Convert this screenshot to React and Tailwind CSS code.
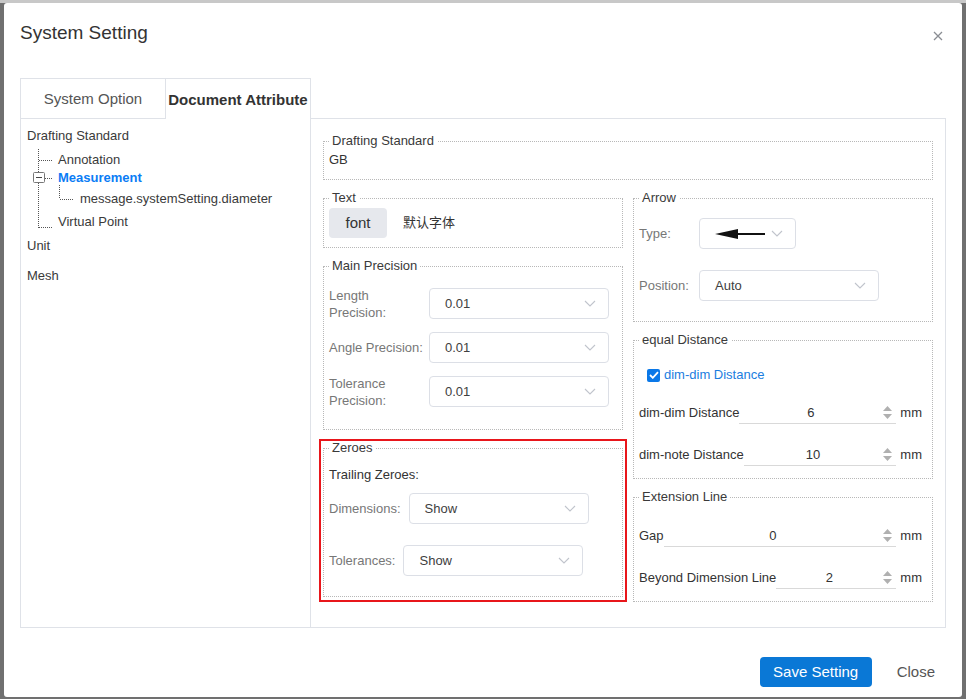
import React from "react";

const FONT = { fontFamily: '"Liberation Sans", "Noto Sans CJK SC", sans-serif' };

function Chevron() {
  return (
    <svg width="12" height="7" viewBox="0 0 12 7" fill="none">
      <path d="M1 1l5 5 5-5" stroke="#c0c4cc" strokeWidth="1.1" />
    </svg>
  );
}

function Select({ value, width, children }) {
  return (
    <div
      className={`h-[31px] ${width} shrink-0 border border-[#dcdfe6] rounded-[4px] flex items-center justify-between pl-[15px] pr-[12px] text-[13px] text-[#404040]`}
    >
      {children || <span>{value}</span>}
      <Chevron />
    </div>
  );
}

function Box({ title, className = "", children }) {
  return (
    <fieldset className={`border border-dotted border-[#b8b8b8] px-[5px] ${className}`}>
      <legend className="px-[3px] text-[13px] leading-[14px] text-[#3a3a3a]">{title}</legend>
      {children}
    </fieldset>
  );
}

function Spin({ label, value, className = "" }) {
  return (
    <div className={`flex items-center h-[22px] text-[13px] text-[#333] ${className}`}>
      <span className="whitespace-nowrap">{label}</span>
      <div className="flex-1 h-[22px] flex items-center border-b border-[#d9d9d9]">
        <span className="flex-1 text-center">{value}</span>
        <div className="w-[10px] mr-[4px] flex flex-col items-center gap-[3px]">
          <svg width="9" height="5" viewBox="0 0 9 5">
            <path d="M0 5L4.5 0 9 5z" fill="#b0b0b0" />
          </svg>
          <svg width="9" height="5" viewBox="0 0 9 5">
            <path d="M0 0L4.5 5 9 0z" fill="#b0b0b0" />
          </svg>
        </div>
      </div>
      <span className="ml-[4px]">mm</span>
    </div>
  );
}

// dotted connectors of the tree, coords relative to the tree block (x 21, y 119)
function TreeLines() {
  return (
    <svg className="absolute left-0 top-0 pointer-events-none" width="80" height="120" fill="none">
      <g stroke="#555" strokeWidth="1" strokeDasharray="1 1">
        <path d="M17.5 30v24M17.5 64v45" />
        <path d="M18 41.5h13M24 59.5h7M18 108.5h13" />
        <path d="M38.5 66v14M39 80.5h13" />
      </g>
      <rect x="12.5" y="53.5" width="11" height="10" rx="1" stroke="#777" fill="#fff" />
      <path d="M15 58.5h6" stroke="#444" strokeWidth="1" />
    </svg>
  );
}

export default function App() {
  return (
    <div className="w-full h-[699px] bg-[#707070] overflow-hidden" style={FONT}>
      <div className="h-[3px] bg-[#c8c8c8]" />
      <div className="relative ml-[4px] w-[958px] h-[694px] bg-white rounded-[3px]">
        <div className="absolute right-[19px] top-[28px]">
          <svg width="10" height="10" viewBox="0 0 10 10">
            <path d="M1 1l8 8M9 1L1 9" stroke="#8a8d93" strokeWidth="1.3" />
          </svg>
        </div>

        <div className="pl-4 pt-4 h-[44px] text-[19px] leading-[28px] text-[#333]">System Setting</div>

        <div className="flex ml-4 mt-[31px] h-[550px]">
          <div className="relative w-[291px] border border-[#dfe2e8] flex flex-col">
            <div className="flex h-[40px] shrink-0">
              <div className="w-[145px] pt-[2px] border-r border-b border-[#dfe2e8] flex items-center justify-center text-[15px] text-[#555]">
                System Option
              </div>
              <div className="flex-1 pt-[2px] flex items-center justify-center whitespace-nowrap text-[15px] font-bold text-[#333]">
                Document Attribute
              </div>
            </div>
            <div className="relative text-[13px] leading-[16px] text-[#3a3a3a]">
              <TreeLines />
              <div className="pl-[6px] pt-[9px]">Drafting Standard</div>
              <div className="pl-[37px] mt-[8px]">Annotation</div>
              <div className="pl-[37px] mt-[2px] font-bold text-[#0a7cf5]">Measurement</div>
              <div className="pl-[59px] mt-[5px]">message.systemSetting.diameter</div>
              <div className="pl-[37px] mt-[7px]">Virtual Point</div>
              <div className="pl-[6px] mt-[8px]">Unit</div>
              <div className="pl-[6px] mt-[14px]">Mesh</div>
            </div>
          </div>

          <div className="w-[635px] mt-[40px] border-t border-r border-b border-[#dfe2e8] pl-[12px] pr-[12px] pt-[15px]">
            <Box title="Drafting Standard" className="pb-[12px]">
              <div className="mt-[4px] text-[13px] leading-[15px] text-[#333]">GB</div>
            </Box>

            <div className="grid grid-cols-2 gap-x-[10px] mt-[11px] items-start">
              <div className="flex flex-col">
                <Box title="Text" className="pb-[9px]">
                  <div className="mt-[3px] flex items-center">
                    <div className="h-[30px] w-[58px] rounded-[4px] bg-[#e6e8ed] flex items-center justify-center text-[15px] text-[#333]">
                      font
                    </div>
                    <span className="ml-[16px] text-[13px] text-[#333]">默认字体</span>
                  </div>
                </Box>

                <Box title="Main Precision" className="mt-[11px] pb-[22px]">
                  <div className="mt-[15px] flex flex-col gap-[13px] text-[13px] leading-[17px] text-[#777]">
                    <div className="flex items-center h-[31px]">
                      <span className="w-[100px] shrink-0">Length<br />Precision:</span>
                      <Select value="0.01" width="w-[180px]" />
                    </div>
                    <div className="flex items-center h-[31px]">
                      <span className="w-[100px] shrink-0 whitespace-nowrap">Angle Precision:</span>
                      <Select value="0.01" width="w-[180px]" />
                    </div>
                    <div className="flex items-center h-[31px]">
                      <span className="w-[100px] shrink-0">Tolerance<br />Precision:</span>
                      <Select value="0.01" width="w-[180px]" />
                    </div>
                  </div>
                </Box>

                <div className="mt-[9px] -mx-[4px] border-2 border-[#e8161b] px-[2px] pb-[3px]">
                  <Box title="Zeroes" className="pb-[20px]">
                    <div className="mt-[12px] text-[13px] leading-[16px] text-[#333]">Trailing Zeroes:</div>
                    <div className="mt-[10px] flex items-center gap-[8px] text-[13px] text-[#777]">
                      <span>Dimensions:</span>
                      <Select value="Show" width="w-[180px]" />
                    </div>
                    <div className="mt-[21px] flex items-center gap-[8px] text-[13px] text-[#777]">
                      <span>Tolerances:</span>
                      <Select value="Show" width="w-[180px]" />
                    </div>
                  </Box>
                </div>
              </div>

              <div className="flex flex-col">
                <Box title="Arrow" className="pb-[20px]">
                  <div className="mt-[13px] flex items-center text-[13px] text-[#777]">
                    <span className="w-[60px]">Type:</span>
                    <Select width="w-[97px]">
                      <svg width="52" height="12" viewBox="0 0 52 12">
                        <path d="M0 6L23 1v10z" fill="#111" />
                        <path d="M22 6h28" stroke="#111" strokeWidth="2" />
                      </svg>
                    </Select>
                  </div>
                  <div className="mt-[21px] flex items-center text-[13px] text-[#777]">
                    <span className="w-[60px]">Position:</span>
                    <Select value="Auto" width="w-[180px]" />
                  </div>
                </Box>

                <Box title="equal Distance" className="mt-[11px] pb-[12px] pr-[10px]">
                  <div className="mt-[20px] ml-[8px] flex items-center h-[16px] text-[13px] text-[#1a7de0]">
                    <span className="w-[13px] h-[13px] rounded-[2px] bg-[#0a78e8] flex items-center justify-center">
                      <svg width="10" height="8" viewBox="0 0 10 8">
                        <path d="M1 4l2.8 2.8L9 1.2" stroke="#fff" strokeWidth="1.8" fill="none" />
                      </svg>
                    </span>
                    <span className="ml-[4px]">dim-dim Distance</span>
                  </div>
                  <Spin label="dim-dim Distance" value="6" className="mt-[19px]" />
                  <Spin label="dim-note Distance" value="10" className="mt-[20px]" />
                </Box>

                <Box title="Extension Line" className="mt-[11px] pb-[12px] pr-[10px]">
                  <Spin label="Gap" value="0" className="mt-[21px]" />
                  <Spin label="Beyond Dimension Line" value="2" className="mt-[20px]" />
                </Box>
              </div>
            </div>
          </div>
        </div>

        <div className="flex justify-end items-center mt-[29px] pr-[27px]">
          <button className="h-[30px] w-[112px] rounded-[4px] bg-[#0a78d6] text-white text-[15px]">Save Setting</button>
          <button className="ml-[25px] text-[15px] text-[#555]">Close</button>
        </div>
      </div>
    </div>
  );
}
